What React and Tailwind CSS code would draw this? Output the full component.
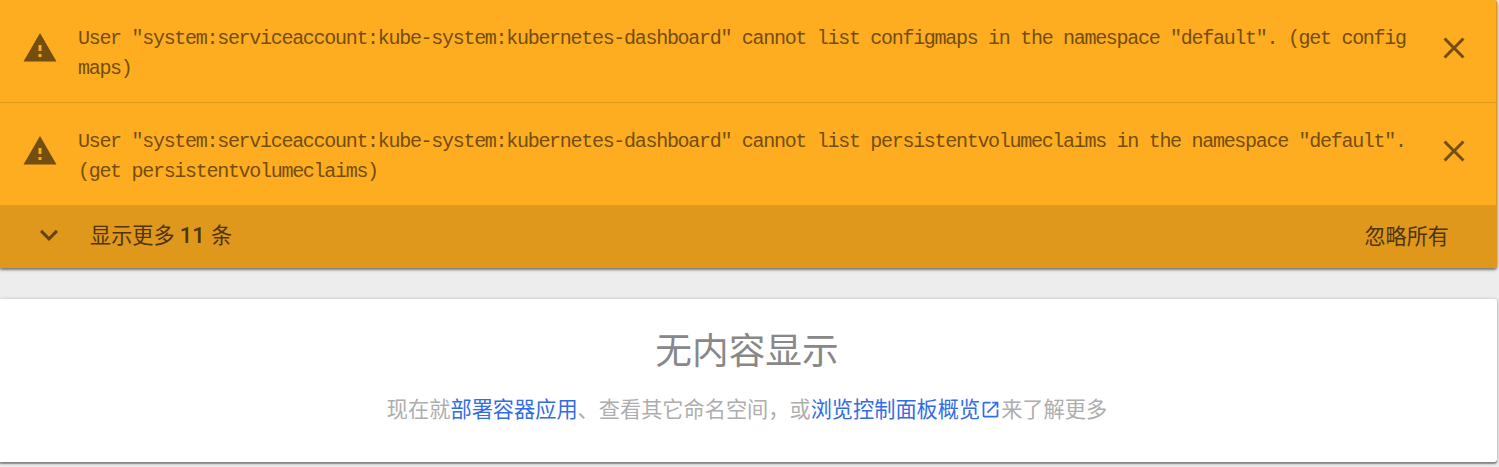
const messages = [
  [
    'User "system:serviceaccount:kube-system:kubernetes-dashboard" cannot list configmaps in the namespace "default". (get config',
    'maps)',
  ],
  [
    'User "system:serviceaccount:kube-system:kubernetes-dashboard" cannot list persistentvolumeclaims in the namespace "default".',
    '(get persistentvolumeclaims)',
  ],
];

function Icon({ d, className }) {
  return (
    <svg viewBox="0 0 24 24" fill="currentColor" className={className}>
      <path d={d} />
    </svg>
  );
}

function Warning({ lines }) {
  return (
    <div className="flex h-[103px] items-start border-b border-[#df981c] pt-6">
      <Icon
        d="M1 21h22L12 2 1 21zm12-3h-2v-2h2v2zm0-4h-2v-4h2v4z"
        className="mt-[6px] ml-[22px] size-9 shrink-0 text-[#734e0f]"
      />
      <div className="ml-5 grow whitespace-pre font-['Liberation_Mono',monospace] text-[20px] leading-[30px] tracking-[-1.295px] text-[#734e0f]">
        {lines.map((line) => (
          <div key={line}>{line}</div>
        ))}
      </div>
      <Icon
        d="M19 6.41L17.59 5 12 10.59 6.41 5 5 6.41 10.59 12 5 17.59 6.41 19 12 13.41 17.59 19 19 17.59 13.41 12z"
        className="mt-[6px] mr-6 size-9 shrink-0 text-[#734e0f]"
      />
    </div>
  );
}

export default function App() {
  return (
    <div className="h-[467px] overflow-hidden bg-[#ededed] pr-[2px] font-[Roboto,'Noto_Sans_CJK_SC',sans-serif]">
      <section className="h-[268px] rounded-r-[3px] bg-[#ffad20] shadow-[0_1px_4px_rgba(0,0,0,0.35),0_2px_2px_rgba(0,0,0,0.3)]">
        <div className="rounded-tr-[3px] border-r border-[#df981c]">
          {messages.map((lines) => (
            <Warning key={lines[1]} lines={lines} />
          ))}
        </div>
        <div className="flex h-[62px] items-start rounded-br-[3px] bg-[#df981c] pt-[15px] text-[21.15px] leading-[30px] text-[#4e350a]">
          <Icon
            d="M7.41 7.84L12 12.42l4.59-4.58L18 9.25l-6 6-6-6z"
            className="-mt-[3px] ml-[31px] size-9 shrink-0 text-[#64440c]"
          />
          <div className="ml-[23px] grow">
            显示更多 <span className="text-[22px] font-medium">11</span>
            <span className="ml-px"> 条</span>
          </div>
          <div className="mt-px mr-[48px]">忽略所有</div>
        </div>
      </section>
      <section className="mt-[31px] flex h-[163px] flex-col items-center rounded-r-[3px] bg-white pr-[3px] shadow-[0_1px_4px_rgba(0,0,0,0.3),0_2px_1px_rgba(0,0,0,0.3)]">
        <h1 className="mt-[29px] text-[36.7px] leading-[48px] text-[#888888]">无内容显示</h1>
        <p className="mt-[18px] flex items-center whitespace-nowrap text-[21.2px] leading-[32px] text-[#aeaeae]">
          现在就<a className="text-[#326de6]">部署容器应用</a>、查看其它命名空间，或
          <a className="flex items-center text-[#326de6]">
            浏览控制面板概览
            <Icon
              d="M19 19H5V5h7V3H5c-1.11 0-2 .9-2 2v14c0 1.1.89 2 2 2h14c1.1 0 2-.9 2-2v-7h-2v7zM14 3v2h3.59l-9.83 9.83 1.41 1.41L19 6.41V10h2V3h-7z"
              className="mb-[2px] size-[21px]"
            />
          </a>
          来了解更多
        </p>
      </section>
    </div>
  );
}
